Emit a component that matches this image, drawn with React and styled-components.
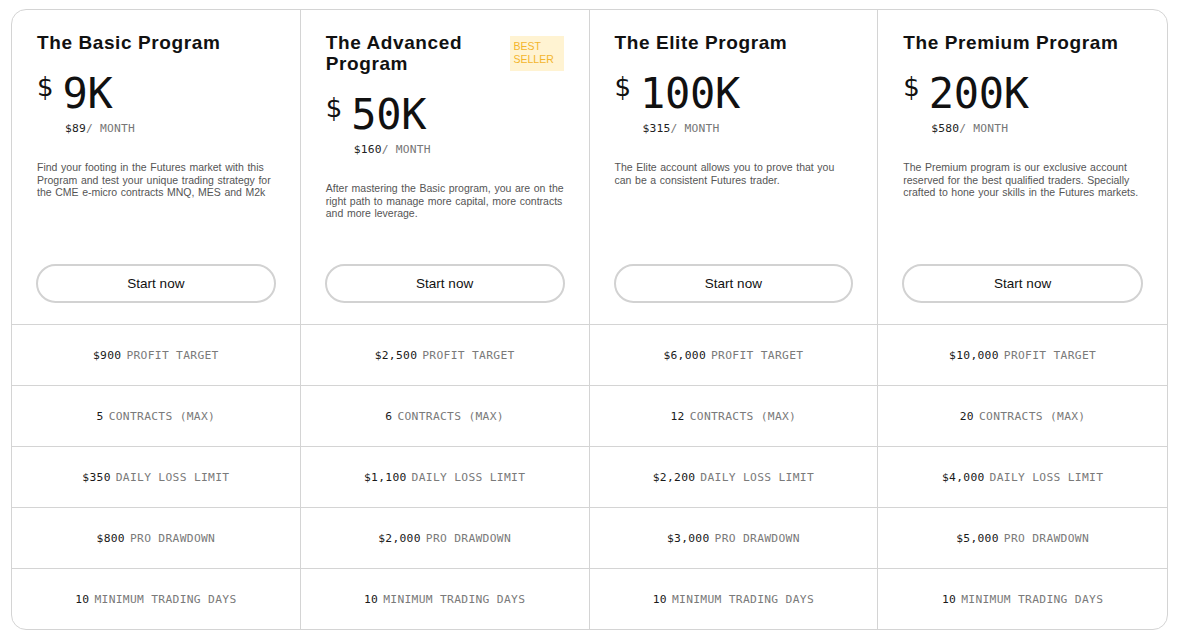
import React from "react";
import styled, { createGlobalStyle } from "styled-components";

const GlobalStyle = createGlobalStyle`
  html, body { margin: 0; padding: 0; background: #ffffff; }
  body { font-family: "Liberation Sans", Arial, sans-serif; color: #111; }
  * { box-sizing: border-box; }
`;

const Page = styled.div`
  padding: 9px 13px 12px 11px;
`;

const Table = styled.div`
  width: 1157px;
  display: grid;
  grid-template-columns: repeat(4, 1fr);
  border: 1px solid #d4d4d4;
  border-radius: 15px;
  overflow: hidden;
  background: #fff;
`;

const Column = styled.div`
  display: flex;
  flex-direction: column;
  border-right: ${(p) => (p.$last ? "none" : "1px solid #d4d4d4")};
`;

const Header = styled.div`
  height: 314px;
  padding: 22px 24px 21px 25px;
  display: flex;
  flex-direction: column;
`;

const TitleRow = styled.div`
  display: flex;
  justify-content: space-between;
  align-items: flex-start;
  gap: 12px;
  padding-right: 1px;
`;

const Title = styled.h2`
  margin: 0;
  font-family: "Liberation Sans", Arial, sans-serif;
  font-weight: 700;
  font-size: 19px;
  line-height: 21px;
  color: #111;
  letter-spacing: 0.6px;
`;

const Badge = styled.div`
  flex: 0 0 54px;
  width: 54px;
  margin-top: 4px;
  padding: 4px 4px 5px 4px;
  background: #fff3d2;
  color: #f3b52c;
  font-family: "Liberation Sans", Arial, sans-serif;
  font-size: 10.5px;
  line-height: 13px;
  text-transform: uppercase;
`;

const PriceRow = styled.div`
  margin-top: 20px;
  display: flex;
  align-items: flex-start;
  gap: 9px;
`;

const Dollar = styled.span`
  font-family: "DejaVu Sans", sans-serif;
  font-size: 26px;
  line-height: 26px;
  margin-top: 1px;
  color: #111;
`;

const Amount = styled.span`
  font-family: "DejaVu Sans Mono", monospace;
  font-size: 42px;
  line-height: 42px;
  color: #111;
  letter-spacing: -0.3px;
`;

const Monthly = styled.div`
  margin-top: 7px;
  margin-left: 28px;
  font-family: "DejaVu Sans Mono", monospace;
  font-size: 11.3px;
  line-height: 14px;
  color: #777;
  letter-spacing: 0.2px;
`;

const Strong = styled.span`
  color: #222;
`;

const Description = styled.p`
  margin: 25px 0 0 0;
  font-family: "Liberation Sans", Arial, sans-serif;
  font-size: 10.5px;
  line-height: 12.5px;
  word-spacing: 0.7px;
  color: #555;
`;

const Button = styled.button`
  margin-top: auto;
  height: 39px;
  width: calc(100% + 1px);
  margin-left: -1px;
  border: 2px solid #d2d2d2;
  border-radius: 20px;
  background: #fff;
  font-family: "Liberation Sans", Arial, sans-serif;
  font-size: 13.5px;
  color: #111;
  cursor: pointer;
`;

const Row = styled.div`
  height: 61px;
  border-top: 1px solid #d4d4d4;
  display: flex;
  align-items: center;
  justify-content: center;
  gap: 5px;
  font-family: "DejaVu Sans Mono", monospace;
  font-size: 11.3px;
  letter-spacing: 0.3px;
`;

const Value = styled.span`
  color: #1a1a1a;
`;

const Label = styled.span`
  color: #7a7a7a;
`;

const programs = [
  {
    title: "The Basic Program",
    amount: "9K",
    month: "$89",
    desc: "Find your footing in the Futures market with this Program and test your unique trading strategy for the CME e-micro contracts MNQ, MES and M2k",
    rows: ["$900", "5", "$350", "$800", "10"],
  },
  {
    title: "The Advanced Program",
    badge: true,
    amount: "50K",
    month: "$160",
    desc: "After mastering the Basic program, you are on the right path to manage more capital, more contracts and more leverage.",
    rows: ["$2,500", "6", "$1,100", "$2,000", "10"],
  },
  {
    title: "The Elite Program",
    amount: "100K",
    month: "$315",
    desc: "The Elite account allows you to prove that you can be a consistent Futures trader.",
    rows: ["$6,000", "12", "$2,200", "$3,000", "10"],
  },
  {
    title: "The Premium Program",
    amount: "200K",
    month: "$580",
    desc: "The Premium program is our exclusive account reserved for the best qualified traders. Specially crafted to hone your skills in the Futures markets.",
    rows: ["$10,000", "20", "$4,000", "$5,000", "10"],
  },
];

const labels = [
  "PROFIT TARGET",
  "CONTRACTS (MAX)",
  "DAILY LOSS LIMIT",
  "PRO DRAWDOWN",
  "MINIMUM TRADING DAYS",
];

export default function App() {
  return (
    <Page>
      <GlobalStyle />
      <Table>
        {programs.map((p, i) => (
          <Column key={p.title} $last={i === programs.length - 1}>
            <Header>
              <TitleRow>
                <Title>{p.title}</Title>
                {p.badge && <Badge>Best Seller</Badge>}
              </TitleRow>
              <PriceRow>
                <Dollar>$</Dollar>
                <Amount>{p.amount}</Amount>
              </PriceRow>
              <Monthly>
                <Strong>{p.month}</Strong>/ MONTH
              </Monthly>
              <Description>{p.desc}</Description>
              <Button>Start now</Button>
            </Header>
            {p.rows.map((v, j) => (
              <Row key={j}>
                <Value>{v}</Value>
                <Label>{labels[j]}</Label>
              </Row>
            ))}
          </Column>
        ))}
      </Table>
    </Page>
  );
}
